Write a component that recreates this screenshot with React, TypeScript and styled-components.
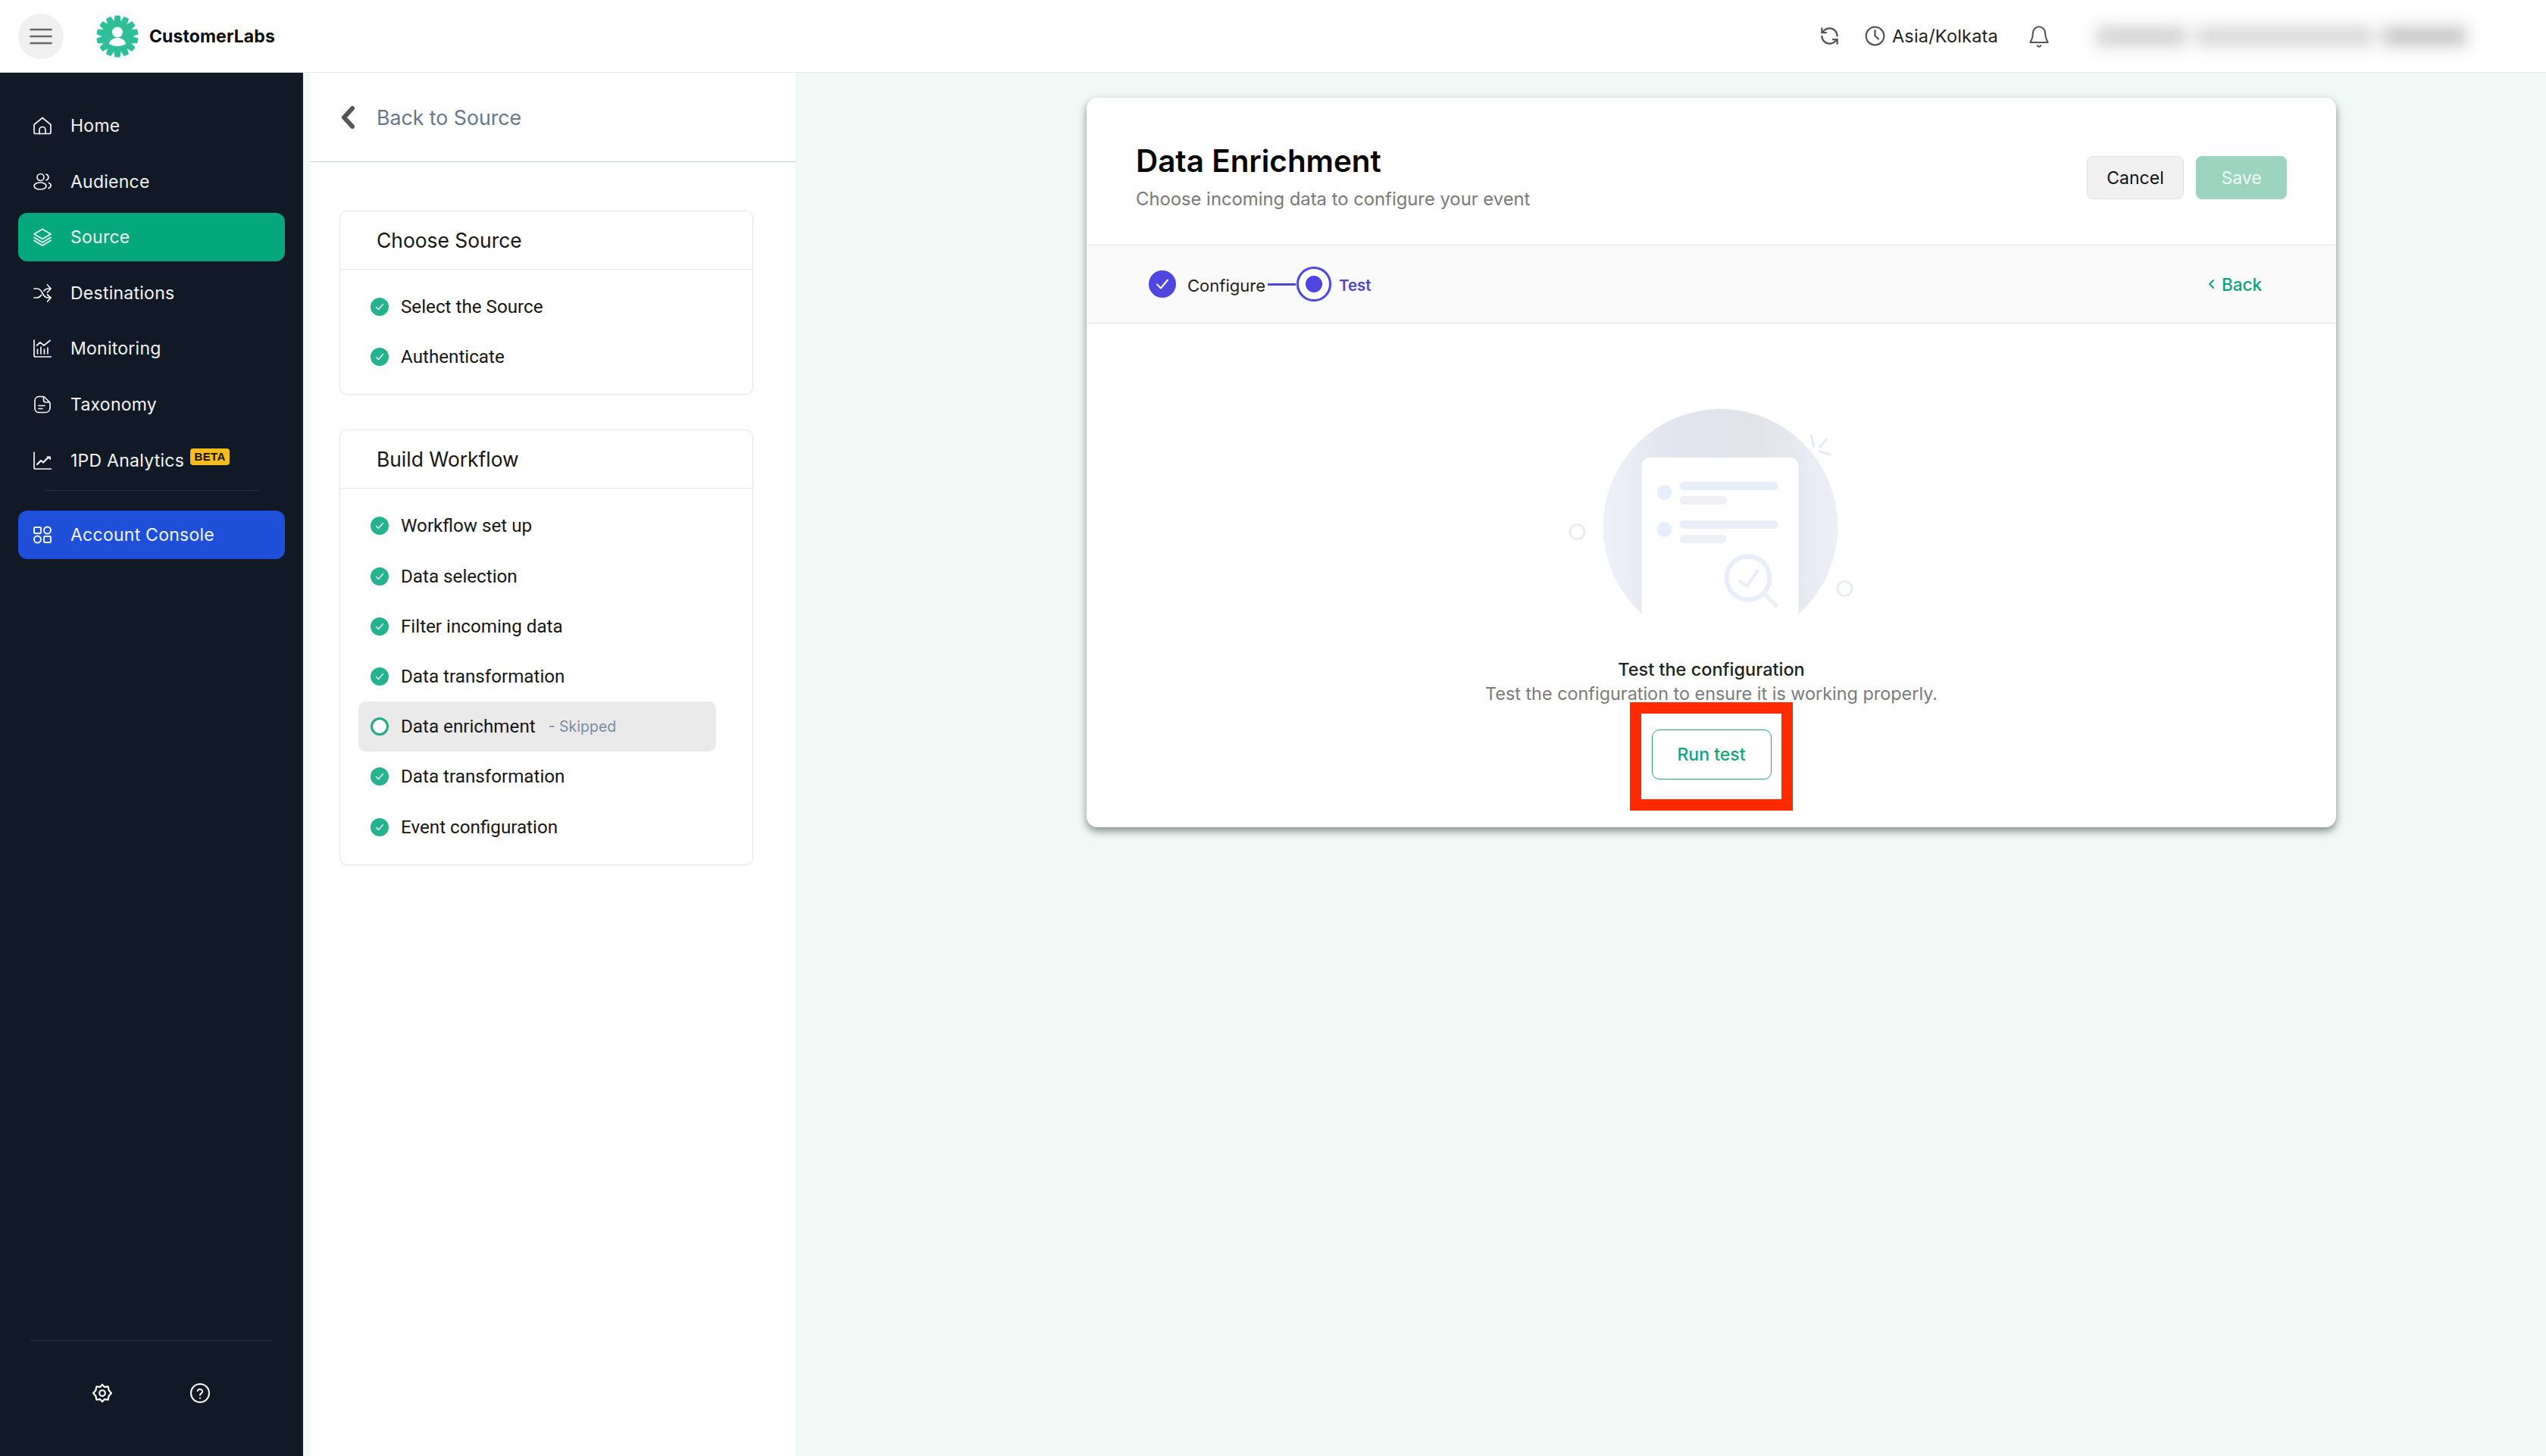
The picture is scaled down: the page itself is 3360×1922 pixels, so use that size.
import React from 'react';
import styled, { createGlobalStyle } from 'styled-components';

const GlobalStyle = createGlobalStyle`
  html, body, #root {
    margin: 0;
    padding: 0;
    height: 100%;
  }
  body {
    font-family: Inter, "Liberation Sans", sans-serif;
    background: #f0f9f6;
    color: #111;
  }
  * { box-sizing: border-box; }
`;

const Page = styled.div`
  display: flex;
  flex-direction: column;
  height: 1922px;
  overflow: hidden;
`;

/* top bar */
const TopBar = styled.header`
  flex: 0 0 96px;
  height: 96px;
  display: flex;
  align-items: center;
  background: #fff;
  border-bottom: 1px solid #e6e8e8;
  padding-left: 24px;
  position: relative;
  z-index: 2;
`;

const MenuButton = styled.button`
  width: 60px;
  height: 60px;
  border: 0;
  border-radius: 50%;
  background: #f0f0f0;
  padding: 0;
  display: flex;
  align-items: center;
  justify-content: center;
`;

const BrandLogo = styled.svg`
  width: 56px;
  height: 58px;
  margin-left: 43px;
`;

const BrandName = styled.span`
  margin-left: 14px;
  font-size: 23px;
  font-weight: 700;
  letter-spacing: 0.1px;
  color: #0c0c0c;
`;

const TopRight = styled.div`
  margin-left: auto;
  display: flex;
  align-items: center;
  padding-right: 93px;
`;

const TopIcon = styled.svg`
  display: block;
  color: #555;
`;

const TimeZone = styled.span`
  margin-left: 9px;
  margin-right: 40px;
  font-size: 23.5px;
  color: #222;
  letter-spacing: 0.2px;
`;

const BlurredUser = styled.div`
  margin-left: 61px;
  width: 501px;
  display: flex;
  gap: 12px;
  filter: blur(10px);
`;

const BlurBlock = styled.span<{ $w: number; $tone: string }>`
  display: block;
  height: 26px;
  width: ${p => p.$w}px;
  background: ${p => p.$tone};
`;

/* layout */
const Body = styled.div`
  flex: 1;
  display: flex;
  min-height: 0;
`;

const Sidebar = styled.aside`
  flex: 0 0 400px;
  background: #111927;
  display: flex;
  flex-direction: column;
  padding: 38px 24px 0;
`;

const NavRow = styled.a<{ $active?: boolean }>`
  height: 64px;
  margin-bottom: 9.6px;
  border-radius: 12px;
  display: flex;
  align-items: center;
  padding-left: 20px;
  background: ${p => (p.$active ? '#05a77d' : 'transparent')};
  color: #f2f4f6;
  font-size: 23px;
  letter-spacing: 0.25px;
`;

const NavIcon = styled.svg`
  width: 24px;
  height: 24px;
  flex: none;
  margin-right: 25px;
`;

const BetaTag = styled.span`
  margin-left: 8px;
  margin-top: -9px;
  width: 52px;
  height: 22px;
  background: #f7bb1d;
  color: #111;
  border-radius: 4px;
  font-size: 15px;
  font-weight: 700;
  line-height: 22px;
  text-align: center;
  letter-spacing: 0.3px;
  font-family: "Liberation Sans", Arial, sans-serif;
`;

const NavDivider = styled.div`
  height: 1px;
  margin: -2px 35px 26px;
  background: #2c3444;
`;

const ConsoleRow = styled(NavRow)`
  background: #1f4fd8;
  margin-bottom: 0;
`;

const SidebarFooter = styled.div`
  margin: auto 16px 0;
  border-top: 1px solid #2a3140;
  height: 153px;
  display: flex;
  padding: 56px 0 0 82px;
  gap: 103px;
`;

const FooterIcon = styled.svg`
  width: 26px;
  height: 26px;
  color: #fff;
`;

/* steps panel */
const StepsPanel = styled.section`
  flex: 0 0 641px;
  margin-left: 9px;
  background: #fff;
  display: flex;
  flex-direction: column;
`;

const BackRow = styled.div`
  height: 118px;
  flex: none;
  border-bottom: 1px solid #c9d1d4;
  display: flex;
  align-items: center;
  padding-left: 39px;
  color: #66788a;
  font-size: 26.7px;
  font-weight: 400;
`;

const BackChevron = styled.svg`
  width: 22px;
  height: 32px;
  margin-right: 27px;
  color: #555;
`;

const StepCards = styled.div`
  padding: 64px 56px 0 39px;
  display: flex;
  flex-direction: column;
  gap: 46px;
`;

const StepCard = styled.div`
  border: 1.5px solid #e3e5e6;
  border-radius: 10px;
  box-shadow: 0 1px 2px rgba(0, 0, 0, 0.05);
  padding-bottom: 16px;
`;

const StepCardTitle = styled.h3`
  margin: 0 0 16px;
  height: 77px;
  border-bottom: 1.5px solid #e5e7e8;
  display: flex;
  align-items: center;
  padding-left: 48px;
  font-size: 26.4px;
  font-weight: 400;
  color: #151515;
`;

const StepRow = styled.div<{ $current?: boolean }>`
  height: 66.2px;
  width: 472px;
  margin-left: 24px;
  padding-left: 16px;
  display: flex;
  align-items: center;
  border-radius: 10px;
  background: ${p => (p.$current ? '#eaeaeb' : 'transparent')};
  font-family: Roboto, sans-serif;
  font-size: 24.2px;
  color: #161616;
`;

const StepIcon = styled.svg`
  width: 24px;
  height: 24px;
  margin-right: 16px;
  flex: none;
`;

const StepNote = styled.span`
  margin-left: 17px;
  font-family: Inter, sans-serif;
  font-size: 19.5px;
  color: #7b8aa0;
`;

/* main area */
const Main = styled.main`
  flex: 1;
  padding: 33px 0 0 384px;
`;

const ConfigCard = styled.div`
  width: 1649px;
  background: #fff;
  border-radius: 14px;
  box-shadow: 0 5px 11px rgba(20, 35, 30, 0.5);
  overflow: hidden;
`;

const CardHeader = styled.div`
  height: 195px;
  display: flex;
  align-items: flex-start;
  justify-content: space-between;
  padding: 60px 65px 0;
  border-bottom: 1.5px solid #e2e3e4;
`;

const CardTitle = styled.h1`
  margin: 0;
  font-size: 40.4px;
  line-height: 48px;
  font-weight: 600;
  color: #050505;
`;

const CardSubtitle = styled.p`
  margin: 11px 0 0;
  font-size: 23.8px;
  line-height: 30px;
  color: #7a7a7a;
`;

const HeaderActions = styled.div`
  display: flex;
  gap: 16px;
  margin-top: 17px;
`;

const ActionButton = styled.button<{ $primary?: boolean }>`
  height: 57px;
  width: ${p => (p.$primary ? '120px' : '128px')};
  border-radius: 8px;
  border: ${p => (p.$primary ? '0' : '1px solid #e2e2e2')};
  background: ${p => (p.$primary ? '#9dd4bf' : '#f0f0f0')};
  color: ${p => (p.$primary ? '#f2faf7' : '#111')};
  font-family: inherit;
  font-size: 23px;
  padding: 0;
`;

const StepperBar = styled.div`
  height: 103px;
  display: flex;
  align-items: center;
  background: #fafafa;
  border-bottom: 1.5px solid #e2e3e4;
  padding-left: 82px;
  padding-right: 98px;
`;

const StepperDot = styled.span`
  width: 36px;
  height: 36px;
  border-radius: 50%;
  background: #4f46e0;
  display: flex;
  align-items: center;
  justify-content: center;
  margin-right: 15px;
`;

const StepperLabel = styled.span<{ $active?: boolean }>`
  padding-top: 3px;
  font-size: ${p => (p.$active ? '20.5px' : '22px')};
  font-weight: ${p => (p.$active ? 600 : 400)};
  color: ${p => (p.$active ? '#4f46c8' : '#222')};
`;

const StepperLine = styled.span`
  width: 40px;
  height: 3px;
  margin-left: 3px;
  background: #4f46e0;
`;

const StepperRing = styled.span`
  width: 48px;
  height: 48px;
  margin-left: -3px;
  margin-right: 9px;
  border-radius: 50%;
  background: #e2e0fa;
  display: flex;
  align-items: center;
  justify-content: center;

  &::before {
    content: '';
    width: 40px;
    height: 40px;
    border-radius: 50%;
    border: 3px solid #4f46e0;
    background: radial-gradient(circle, #4f46e0 0 10.5px, #fff 11.5px);
  }
`;

const BackLink = styled.span`
  margin-left: auto;
  display: flex;
  align-items: center;
  gap: 9px;
  color: #0ea37c;
  font-size: 22.5px;
  font-weight: 500;
`;

const CardBody = styled.div`
  display: flex;
  flex-direction: column;
  align-items: center;
  padding: 113px 0 63px;
`;

const Illustration = styled.svg`
  width: 440px;
  height: 290px;
  display: block;
`;

const EmptyTitle = styled.h2`
  margin: 38px 0 0;
  font-size: 23.5px;
  line-height: 32px;
  font-weight: 500;
  color: #222;
`;

const EmptyText = styled.p`
  margin: 0;
  font-size: 23.4px;
  line-height: 32px;
  color: #7b7b7b;
`;

const RunWrap = styled.div`
  position: relative;
  margin-top: 31px;
`;

const RunButton = styled.button`
  width: 158px;
  height: 66px;
  border: 1.5px solid #2a9d8f;
  border-radius: 10px;
  background: #fff;
  color: #14a37f;
  font-family: inherit;
  font-size: 23px;
  font-weight: 500;
  padding: 0;
  display: block;
`;

/* red annotation drawn over the screenshot */
const Highlight = styled.span`
  position: absolute;
  left: -29px;
  right: -28px;
  top: -36px;
  bottom: -41px;
  border: 15px solid #ff2a00;
  pointer-events: none;
`;

const strokeProps = {
  fill: 'none',
  stroke: 'currentColor',
  strokeWidth: 1.7,
  strokeLinecap: 'round' as const,
  strokeLinejoin: 'round' as const,
};

function HomeGlyph() {
  return (
    <NavIcon viewBox="0 0 24 24" {...strokeProps}>
      <path d="M1 10.500 12 1.500l11 9v10a2 2 0 0 1-2 2H3a2 2 0 0 1-2-2z" />
      <path d="M8 22.500v-5a4 4 0 0 1 8 0v5" />
    </NavIcon>
  );
}

function AudienceGlyph() {
  return (
    <NavIcon viewBox="0 0 24 24" {...strokeProps}>
      <circle cx="9.500" cy="6" r="4.500" />
      <ellipse cx="9" cy="17.500" rx="8" ry="4.500" />
      <path d="M17 2a4.200 4.200 0 0 1 0 8" />
      <path d="M20.500 13.500c3.600 1.500 3.600 5.500-.5 7" />
    </NavIcon>
  );
}

function LayersGlyph() {
  return (
    <NavIcon viewBox="0 0 24 24" {...strokeProps}>
      <path d="M12 1.500 23 8l-11 6.500L1 8z" />
      <path d="M1 12.500 12 19l11-6.500" />
      <path d="M1 16.500 12 23l11-6.500" />
    </NavIcon>
  );
}

function ShuffleGlyph() {
  return (
    <NavIcon viewBox="0 0 24 24" {...strokeProps}>
      <path d="M1 6h4c3 0 5 2 7 6s4 6 7 6h4" />
      <path d="M1 18h4c2.500 0 4-1.500 5.500-3.500M14 9c1.500-2 3-3 5-3h4" />
      <path d="M18.500 1 23 6l-4.500 5" />
      <path d="M18.500 14 23 18l-4.500 5" />
    </NavIcon>
  );
}

function MonitorGlyph() {
  return (
    <NavIcon viewBox="0 0 24 24" {...strokeProps}>
      <path d="M1 1v20a2 2 0 0 0 2 2h21" />
      <path d="M5.500 19v-6M10 19v-9M14.500 19v-6M19 19v-8" />
      <path d="M4.500 8 9 4l5 4 8-6.500" />
    </NavIcon>
  );
}

function TaxonomyGlyph() {
  return (
    <NavIcon viewBox="0 0 24 24" {...strokeProps}>
      <path d="M7 1.500h6c1 0 1.500.5 2 1l6 6c.5.500 1 1 1 2V17a6 6 0 0 1-6 5.500H7A5.500 5.500 0 0 1 2 17V7a5.500 5.500 0 0 1 5-5.500z" />
      <path d="M13.500 2v4a3 3 0 0 0 3 3H21" />
      <path d="M7 13.500h8M7 17.500h5" />
    </NavIcon>
  );
}

function TrendGlyph() {
  return (
    <NavIcon viewBox="0 0 24 24" {...strokeProps}>
      <path d="M1 1v20a2 2 0 0 0 2 2h21" />
      <path d="m5 17 5-5 3 2.500 7-7" strokeWidth={2.2} />
      <path d="M17 6.500h6v5z" fill="currentColor" stroke="none" />
    </NavIcon>
  );
}

function ConsoleGlyph() {
  return (
    <NavIcon viewBox="0 0 24 24" {...strokeProps} strokeWidth={2}>
      <rect x="1" y="2" width="9" height="8" rx="1.500" />
      <circle cx="18.500" cy="6" r="4.500" />
      <circle cx="5.500" cy="18" r="4.500" />
      <rect x="14" y="14" width="9" height="8" rx="1.500" />
    </NavIcon>
  );
}

function CheckCircle() {
  return (
    <StepIcon viewBox="0 0 24 24">
      <circle cx="12" cy="12" r="12" fill="#25b28e" />
      <path d="m7.500 12.500 3 3 6-7" fill="none" stroke="#fff" strokeWidth="1.300" strokeLinecap="round" strokeLinejoin="round" />
    </StepIcon>
  );
}

function OpenCircle() {
  return (
    <StepIcon viewBox="0 0 24 24">
      <circle cx="12" cy="12" r="10.500" fill="#fff" stroke="#25a88a" strokeWidth="3" />
    </StepIcon>
  );
}

const TEETH = Array.from({ length: 14 }, (_, i) => (i * 360) / 14);

const chooseSteps = ['Select the Source', 'Authenticate'];
const workflowSteps = [
  { label: 'Workflow set up' },
  { label: 'Data selection' },
  { label: 'Filter incoming data' },
  { label: 'Data transformation' },
  { label: 'Data enrichment', note: '- Skipped' },
  { label: 'Data transformation' },
  { label: 'Event configuration' },
];

export default function App() {
  return (
    <Page>
      <GlobalStyle />
      <TopBar>
        <MenuButton aria-label="Menu">
          <svg width="30" height="24" viewBox="0 0 30 24" fill="none" stroke="#666" strokeWidth="2.500" strokeLinecap="round">
            <path d="M1.500 3h27M1.500 12h27M1.500 21h27" />
          </svg>
        </MenuButton>
        <BrandLogo viewBox="0 0 56 58">
          <g fill="#2fbf98">
            <circle cx="28" cy="29" r="20" />
            {TEETH.map(a => (
              <path key={a} d="M23 12 24.500 1.500h7L33 12z" transform={`rotate(${a} 28 29)`} />
            ))}
          </g>
          <circle cx="28" cy="23.500" r="7" fill="#fff" />
          <path d="M17 39c.5-5 5.500-8 11-8s10.500 3 11 8c-3 2-7 3-11 3s-8-1-11-3z" fill="#fff" />
        </BrandLogo>
        <BrandName>CustomerLabs</BrandName>
        <TopRight>
          <TopIcon width="27" height="27" viewBox="0 0 24 24" {...strokeProps} strokeWidth={2}>
            <path d="M21 12a9 9 0 0 0-9-9 9.750 9.750 0 0 0-6.740 2.740L3 8" />
            <path d="M3 3v5h5" />
            <path d="M3 12a9 9 0 0 0 9 9 9.750 9.750 0 0 0 6.740-2.740L21 16" />
            <path d="M16 16h5v5" />
          </TopIcon>
          <TopIcon width="27" height="27" viewBox="0 0 24 24" {...strokeProps} strokeWidth={2} style={{ marginLeft: 33 }}>
            <circle cx="12" cy="12" r="10.500" />
            <path d="M12 5.500V12l4 3.500" />
          </TopIcon>
          <TimeZone>Asia/Kolkata</TimeZone>
          <TopIcon width="28" height="30" viewBox="0 0 24 26" {...strokeProps} strokeWidth={1.800}>
            <path d="M12 2a7 7 0 0 0-7 7c0 7-2.500 9-3 11h20c-.5-2-3-4-3-11a7 7 0 0 0-7-7z" />
            <path d="M10 23.500a2.200 2.200 0 0 0 4 0" />
          </TopIcon>
          <BlurredUser>
            <BlurBlock $w={120} $tone="#d2d2d2" />
            <BlurBlock $w={235} $tone="#d8d8d8" />
            <BlurBlock $w={110} $tone="#c6c6c6" />
          </BlurredUser>
        </TopRight>
      </TopBar>

      <Body>
        <Sidebar>
          <NavRow><HomeGlyph />Home</NavRow>
          <NavRow><AudienceGlyph />Audience</NavRow>
          <NavRow $active><LayersGlyph />Source</NavRow>
          <NavRow><ShuffleGlyph />Destinations</NavRow>
          <NavRow><MonitorGlyph />Monitoring</NavRow>
          <NavRow><TaxonomyGlyph />Taxonomy</NavRow>
          <NavRow><TrendGlyph />1PD Analytics<BetaTag>BETA</BetaTag></NavRow>
          <NavDivider />
          <ConsoleRow><ConsoleGlyph />Account Console</ConsoleRow>
          <SidebarFooter>
            <FooterIcon viewBox="0 0 24 24" {...strokeProps} strokeWidth={2}>
              <path d="M12 1.500 14.500 4.500 19 4l1 4.500L23 12l-3 3.500-1 4.500-4.500-.5L12 22.500 9.500 19.500 5 20l-1-4.500L1 12l3-3.500L5 4l4.500.5z" />
              <circle cx="12" cy="12" r="3.500" />
            </FooterIcon>
            <FooterIcon viewBox="0 0 26 26" {...strokeProps} strokeWidth={2}>
              <circle cx="13" cy="13" r="12" />
              <path d="M9.800 10a3.300 3.300 0 0 1 6.400 1c0 2.200-3.200 2.500-3.200 4.500" />
              <path d="M13 19.500v.2" />
            </FooterIcon>
          </SidebarFooter>
        </Sidebar>

        <StepsPanel>
          <BackRow>
            <BackChevron viewBox="0 0 22 32" fill="none" stroke="currentColor" strokeWidth="6" strokeLinecap="round" strokeLinejoin="round">
              <path d="M17 4 6 16l11 12" />
            </BackChevron>
            Back to Source
          </BackRow>
          <StepCards>
            <StepCard>
              <StepCardTitle>Choose Source</StepCardTitle>
              {chooseSteps.map(label => (
                <StepRow key={label}><CheckCircle />{label}</StepRow>
              ))}
            </StepCard>
            <StepCard>
              <StepCardTitle>Build Workflow</StepCardTitle>
              {workflowSteps.map(step => (
                <StepRow key={step.label + (step.note ?? '')} $current={!!step.note}>
                  {step.note ? <OpenCircle /> : <CheckCircle />}
                  {step.label}
                  {step.note && <StepNote>{step.note}</StepNote>}
                </StepRow>
              ))}
            </StepCard>
          </StepCards>
        </StepsPanel>

        <Main>
          <ConfigCard>
            <CardHeader>
              <div>
                <CardTitle>Data Enrichment</CardTitle>
                <CardSubtitle>Choose incoming data to configure your event</CardSubtitle>
              </div>
              <HeaderActions>
                <ActionButton>Cancel</ActionButton>
                <ActionButton $primary>Save</ActionButton>
              </HeaderActions>
            </CardHeader>
            <StepperBar>
              <StepperDot>
                <svg width="20" height="20" viewBox="0 0 20 20" fill="none" stroke="#fff" strokeWidth="2" strokeLinecap="round" strokeLinejoin="round">
                  <path d="m3 10.500 5 5 9-11" />
                </svg>
              </StepperDot>
              <StepperLabel>Configure</StepperLabel>
              <StepperLine />
              <StepperRing />
              <StepperLabel $active>Test</StepperLabel>
              <BackLink>
                <svg width="9" height="14" viewBox="0 0 9 14" fill="none" stroke="currentColor" strokeWidth="2" strokeLinecap="round" strokeLinejoin="round">
                  <path d="M7 2 2 7l5 5" />
                </svg>
                Back
              </BackLink>
            </StepperBar>
            <CardBody>
              <Illustration viewBox="78.500 20 440 290">
                <defs>
                  <clipPath id="scene-clip">
                    <rect x="0" y="0" width="520" height="292" />
                  </clipPath>
                  <linearGradient id="disc-shade" x1="0" x2="1" y1="0" y2="0">
                    <stop offset="0" stopColor="#eef1f9" />
                    <stop offset="0.33" stopColor="#e1e4ee" />
                    <stop offset="0.67" stopColor="#e1e5ea" />
                    <stop offset="1" stopColor="#eceff8" />
                  </linearGradient>
                </defs>
                <g clipPath="url(#scene-clip)">
                  <circle cx="310" cy="175" r="155" fill="url(#disc-shade)" />
                  <path d="M206 292V95a11 11 0 0 1 11-11h185a11 11 0 0 1 11 11v197z" fill="#fff" />
                  <circle cx="236" cy="130" r="10" fill="#e6edfb" />
                  <circle cx="236" cy="179" r="10" fill="#e6edfb" />
                  <rect x="256" y="116" width="130" height="11" rx="5" fill="#e8edf9" />
                  <rect x="256" y="135" width="63" height="11" rx="5" fill="#eff0f5" />
                  <rect x="256" y="167" width="130" height="11" rx="5" fill="#e8edf9" />
                  <rect x="256" y="186" width="62" height="11" rx="5" fill="#eff0f7" />
                  <circle cx="346.500" cy="243" r="28.500" fill="none" stroke="#e8edf9" strokeWidth="6" />
                  <path d="m368 264 17 17" stroke="#eef0f4" strokeWidth="6" />
                  <path d="m335 247 10 7 15-22" fill="none" stroke="#e8edf7" strokeWidth="4" />
                </g>
                <circle cx="121" cy="182" r="9.500" fill="none" stroke="#e9ebf6" strokeWidth="3" />
                <circle cx="474" cy="257" r="9.500" fill="none" stroke="#e9ebf6" strokeWidth="3" />
                <path d="m430 55 3 14M441 70l9-10M441 76l14 4" stroke="#e6e8f6" strokeWidth="3" strokeLinecap="round" />
              </Illustration>
              <EmptyTitle>Test the configuration</EmptyTitle>
              <EmptyText>Test the configuration to ensure it is working properly.</EmptyText>
              <RunWrap>
                <RunButton>Run test</RunButton>
                <Highlight />
              </RunWrap>
            </CardBody>
          </ConfigCard>
        </Main>
      </Body>
    </Page>
  );
}
